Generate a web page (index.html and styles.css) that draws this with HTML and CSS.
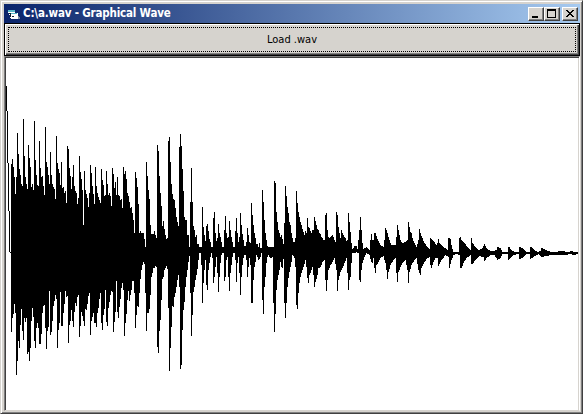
FILE: index.html
```html
<!DOCTYPE html>
<html lang="en">
<head>
<meta charset="utf-8">
<title>C:\a.wav - Graphical Wave</title>
<link rel="stylesheet" href="styles.css">
</head>
<body>
<main class="window">
  <header class="titlebar">
    <svg class="app-icon" width="14" height="14" viewBox="0 0 14 14" shape-rendering="crispEdges">
      <path d="M1 4h7v2h3v6H4v-1H3V8H2V6H1z" fill="#fff"/>
      <path d="M1 3h7v2H1zM4 6h6v1H4z" fill="#58b8c8"/>
      <path d="M2 6h2v1H2zM3 7h1v3H3zM5 9h2v1H5z" fill="#123"/>
      <path d="M11 9h1v1h1v2h-2z" fill="#8090a8"/>
    </svg>
    <h1 class="title">C:\a.wav - Graphical Wave</h1>
    <div class="controls">
      <button class="control" aria-label="Minimize"><svg width="14" height="12" shape-rendering="crispEdges"><path d="M3 8h6v2H3z"/></svg></button>
      <button class="control" aria-label="Maximize"><svg width="14" height="12" shape-rendering="crispEdges"><path fill-rule="evenodd" d="M2 1h9v9H2zM3 3v6h7V3z"/></svg></button>
      <button class="control close" aria-label="Close"><svg width="14" height="12" shape-rendering="crispEdges"><path d="M3 2h2v1h1v1h2V3h1V2h2v1h-1v1H9v1H8v1h1v1h1v1h1v1H9V8H8V7H6v1H5v1H3V8h1V7h1V6h1V5H5V4H4V3H3z"/></svg></button>
    </div>
  </header>
  <button class="load"><span class="focus">Load .wav</span></button>
  <section class="canvas"><svg width="572" height="352" viewBox="6 58 572 352" shape-rendering="crispEdges"><path id="wave"/></svg></section>
</main>
<script src="wave.js"></script>
</body>
</html>
```
FILE: styles.css
```css
* { box-sizing: border-box; }
body { margin: 0; background: #d6d3ce; font-family: Tahoma, "DejaVu Sans Condensed", "DejaVu Sans", sans-serif; }
.window {
  width: 583px; height: 414px; padding: 2px 1px 2px 2px;
  display: flex; flex-direction: column;
  background: #d6d3ce;
  border: 1px solid; border-color: #d6d3ce #404040 #404040 #d6d3ce;
  box-shadow: inset 1px 1px #fff, inset -1px -1px #808080;
}
.titlebar {
  height: 19px; margin: 1px 1px 0; padding: 0 2px 0 3px; flex: none;
  display: flex; align-items: center;
  background: linear-gradient(90deg, #0a246a, #a6caf0);
}
.app-icon { flex: none; }
.title {
  margin: 0 auto 0 2px; color: #fff; white-space: pre;
  font-size: 11.5px; line-height: 17px; font-weight: bold; letter-spacing: -0.18px;
}
.controls { display: flex; }
.control {
  width: 16px; height: 14px; padding: 0; display: flex;
  background: #d6d3ce; border: 1px solid; border-color: #fff #404040 #404040 #fff;
  box-shadow: inset -1px -1px #808080;
}
.close { margin-left: 2px; }
.load {
  height: 33px; width: 576px; margin-left: 1px; padding: 2px; flex: none; display: flex;
  background: #d6d3ce; border: 1px solid #000; color: #000;
  box-shadow: inset 1px 1px #fff, inset -1px -1px #404040, inset -2px -2px #808080;
  font: 11px/20px Tahoma, "DejaVu Sans Condensed", "DejaVu Sans", sans-serif;
}
.focus { flex: 1; margin: 1px; height: 25px; line-height: 23px; border: 1px dotted #000; text-align: center; }
.canvas {
  height: 355px; width: 576px; margin-left: 1px; padding: 1px 0 0 1px; flex: none;
  background: #fff; border: 1px solid;
  border-color: #808080 #fff #d6d3ce #808080;
  box-shadow: inset 1px 1px #404040, inset -1px 0 #d6d3ce;
}
.canvas svg { display: block; }
```
FILE: wave.js
```js
// Envelope samples: "x:y y y ..." starts a run of consecutive columns;
// columns between two runs are interpolated.
const upper = `6:86 111 163 211 252 164 159 167 177 194 177 133 154 169 175 184 186 119 156 177 184 189 145 158 167 187 184 190 121 160 175 185 186 141 168 177 176 186 195 127 162 167 175 184 152 175 184 187 189 199 136 163 169 173 185 162 188 187 193 191 203 146 149 168 176 189 177 165 186 191 193 204 198 156 172 179 190 225 171 190 194 198 207 193 165 173 186 194 204 167 186 193 197 200 203
101:169 180 185 196 195 171 184 195 193 196 206 168 174 188 182 195 177 195 196 200 199 208 167 174 171 179 193 196 202 208 207 213 220 233 172 178 187 204 233 231 233 233 233 239 247 162 176 190 199 225 234 234 234 231 235 238 145 151 176 193 206 226 221 229 235 239 238 141 137 162 184 194 199 200 208 217 222 226 147 134 146 169 191 217 220 220 235 235 247 202 168 202 226 230 237 235 244 244 247 247 247
202:207 227 235 241 226 224 231 239 242 247 247 218 212 233 241 238 224 233 237 242 247 247 230 216 233 238 237 221 230 237 242 247 247 231 218 233 242 237 213 225 234 240 246 246 242 228 235 242 243 203 215 225 233 238 244 244 247 243 248 248 190 202 220 233 240 246 247 247 247 247 247 247 181 183 212 222 230 233 237 235 239 244 223 186 196 207 213 222 225 233 238 242 242 238 191 203 212 217 222 225 229 232 235 231 233 218 227 228 231 233 230 230 217 221 225 229 230 233 234 237 238 240 240 215 213 230 237 238 237 236 235 237 240 242 212 215 227 233 238 230 233 235 237 238 241 240 213 222 232 243 249
354:246 356:246 249 359:230 217 230 243 249 366:247 369:250 240 234 240 240 233 233 236 378:241 380:245 383:247 240 228 230 233 237 240 391:245 395:245 237 225 230 235 240 402:243 405:242 407:240 222 227 232 233 238 414:243 416:247 418:240 229 233 422:238 424:243 427:247 429:249 238 432:240 433:241 436:245 437:243 239 243 442:246 447:250 238 238 239 245 453:252 458:252 238 237 240 464:243 468:248 470:250 238 243 475:247 478:250 482:248 484:244 486:248 490:251 493:251 496:250 247 500:248 502:252 507:252 247 247 511:250 515:252 518:252 247 247 522:248 526:252 529:252 247 247 533:249 537:252 540:251 248 544:249 548:251 552:252 562:251 567:252 571:251 575:252 577:252`;
const lower = `6:111 163 211 252 253 332 318 314 304 313 375 361 341 348 325 309 331 340 318 322 318 354 352 361 348 321 308 317 341 348 328 323 328 344 344 334 313 306 305 328 349 331 327 291 335 332 321 306 301 295 299 348 330 323 292 326 326 313 304 291 297 296 343 325 321 310 321 327 312 303 306 297 295 337 326 312 316 321 326 309 310 304 296 293 335 321 317 313 323 323 327 313 308 299 293
101:323 330 315 309 290 322 326 308 302 295 291 292 332 322 312 281 312 318 307 299 288 283 290 336 323 314 300 291 301 295 290 281 281 293 328 315 306 307 293 279 270 265 262 264 293 331 313 313 309 295 277 273 268 268 266 267 347 353 331 320 300 279 277 270 268 266 269 308 371 348 327 306 307 297 293 287 280 275 287 369 365 330 310 302 287 277 270 262 256 293 336 315 292 287 280 275 269 260 253 253 265
202:303 283 270 260 285 290 270 263 257 253 258 283 277 267 257 273 292 277 263 255 253 253 281 277 260 257 277 291 273 265 257 253 253 260 282 263 257 273 295 277 265 258 255 255 260 277 267 258 265 303 303 280 267 262 255 257 260 259 257 253 300 314 287 277 263 257 255 257 258 258 257 303 332 314 290 280 275 270 262 267 268 259 303 318 303 287 278 272 267 262 255 256 258 267 305 309 293 283 277 273
303:267 305:260 267 278 283 275 273 312:267 275 287 282 317:275 318:268 320:267 322:262 324:260 280 291 280 270 330:265 332:262 334:258 336:270 291 280 340:272 342:268 344:263 346:258 273 290 280 277 263 253 354:253 356:252 358:253 280 282 270 263 364:257 366:253 369:255 371:262 263 258 268 273 265 378:262 380:258 383:256 385:263 270 279 272 390:265 393:260 395:258 273 282 272 400:267 402:263 405:260 407:270 283 272 411:265 414:260 416:258 418:270 420:275 268 424:262 427:258 429:257 265 268 433:262 435:258 437:258 266 441:260 445:255 448:257 268 451:260 453:255 456:254 459:255 268 268 463:263 466:258 470:255 264 264 475:260 479:256 483:257 261 486:258 490:255 494:255 497:260 500:258 502:254 507:254 260 510:258 513:255 518:254 259 522:258 526:254 529:254 259 534:256 538:254 541:257 546:256 550:255 565:255 570:254 573:255 577:254`;

function columns(data) {
  const ys = [];
  let x = 0;
  for (const token of data.split(/\s+/)) {
    const parts = token.split(":");
    const y = Number(parts[parts.length - 1]);
    if (parts.length === 2) {
      const next = Number(parts[0]);
      const last = x - 1;
      for (let i = x; i < next && ys[last] !== undefined; i++) {
        ys[i] = Math.round(ys[last] + (y - ys[last]) * (i - last) / (next - last));
      }
      x = next;
    }
    ys[x++] = y;
  }
  return ys;
}

const peaks = columns(upper);
const troughs = columns(lower);
let d = "";
for (let x = 6; x < 578; x++) {
  d += `M${x} ${peaks[x]}h1V${troughs[x]}h-1z`;
}
document.getElementById("wave").setAttribute("d", d);
```
